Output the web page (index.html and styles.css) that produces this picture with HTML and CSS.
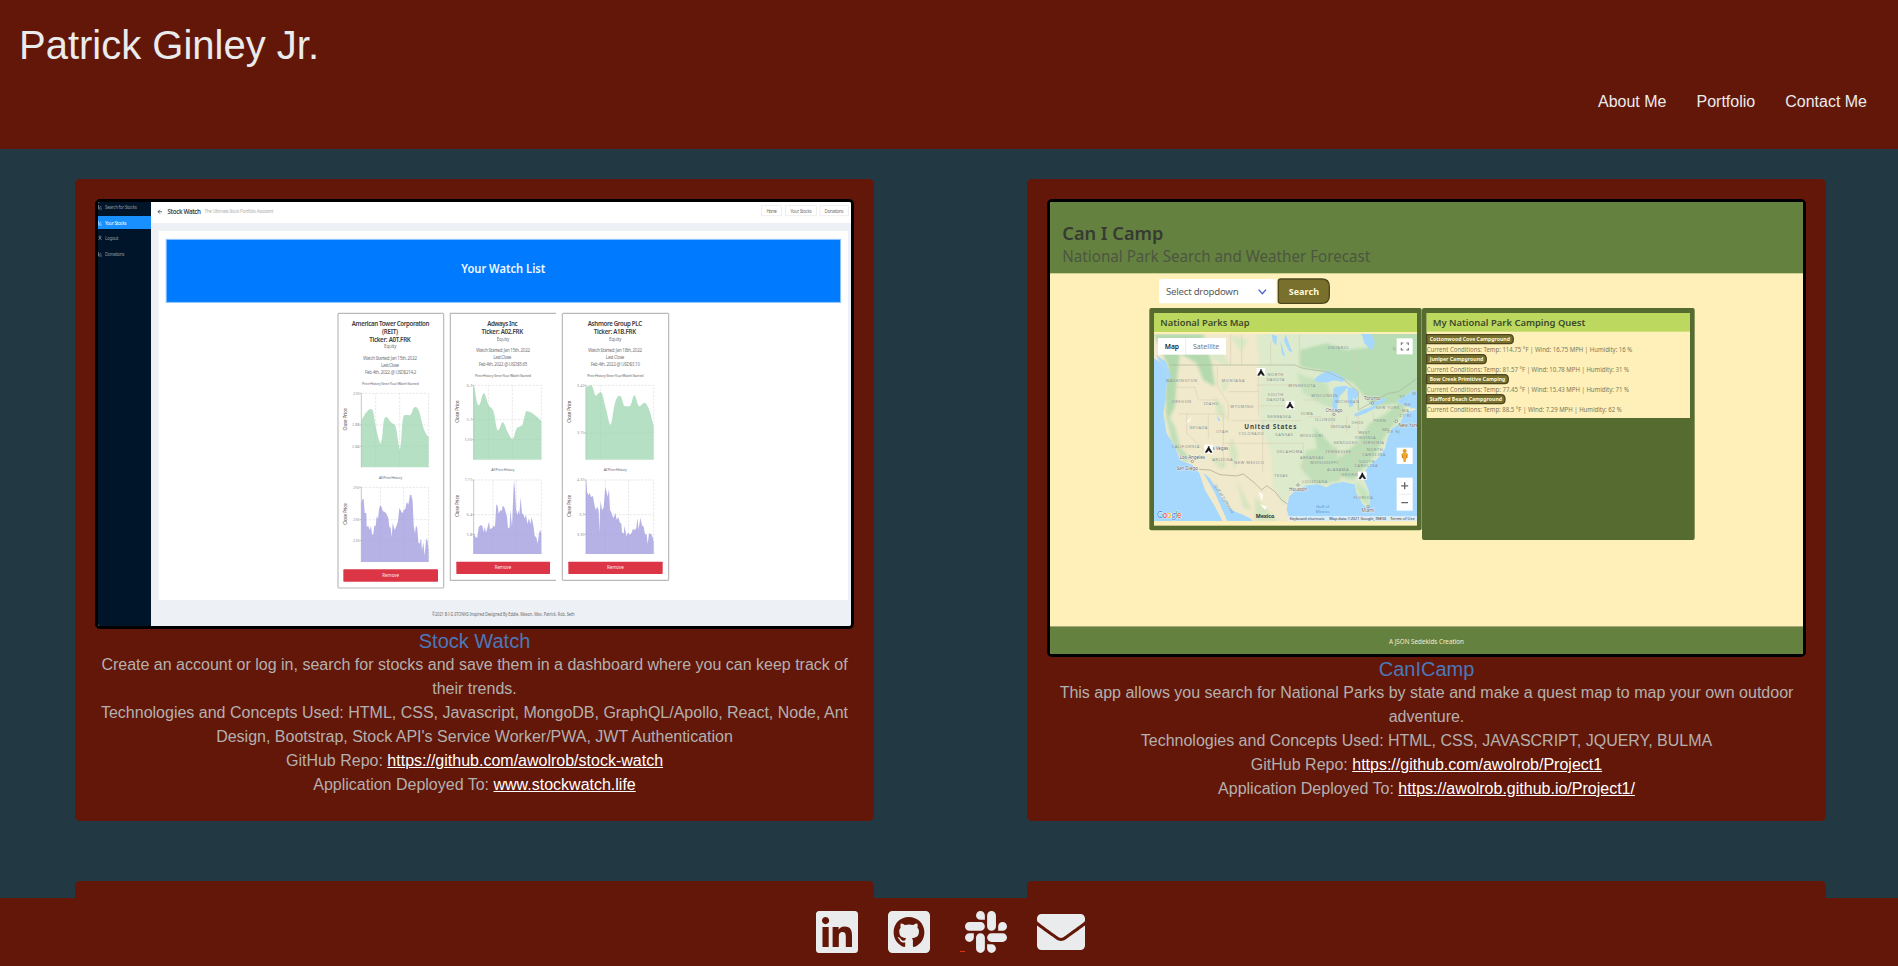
FILE: index.html
```html
<!DOCTYPE html>
<html lang="en">
<head>
<meta charset="utf-8">
<title>Patrick Ginley Jr.</title>
<link rel="stylesheet" href="styles.css">
</head>
<body>
<header class="site-header">
  <h1 class="site-title">Patrick Ginley Jr.</h1>
  <nav class="site-nav">
    <a href="#about">About Me</a>
    <a href="#portfolio">Portfolio</a>
    <a href="#contact">Contact Me</a>
  </nav>
</header>

<main class="projects">
  <article class="project">
    <svg class="shot" viewBox="98 202 753 424" width="753" height="424">
      <rect x="98" y="202" width="753" height="424" fill="#edf1f5"/>
      <rect x="98" y="202" width="53" height="424" fill="#001529"/>
      <rect x="98" y="216" width="53" height="13" fill="#1890ff"/>
      <g font-size="4.6" fill="#8c959f">
        <text x="105" y="209" textLength="32">Search for Stocks</text>
        <text x="105" y="224.6" textLength="21.5" fill="#fff">Your Stocks</text>
        <text x="105" y="240.3" textLength="13.5">Logout</text>
        <text x="105" y="256" textLength="19.5">Donations</text>
      </g>
      <g stroke="#8c959f" stroke-width=".7" fill="none">
        <path d="M98.500 205v4h3.500M99.500 208l1-1.500 1 .500"/>
        <path d="M98.500 221v4h3.500M99.500 224l1-1.500 1 .500" stroke="#cfe7ff"/>
        <path d="M98.500 240l1.500-2 1.500 2"/><circle cx="100" cy="237" r="1"/>
        <path d="M98.500 252v4h3.500M99.500 255l1-1.500 1 .500"/>
      </g>
      <rect x="151" y="202" width="700" height="21" fill="#fff"/>
      <path d="M162 211.700h-4M160 209.700l-2 2 2 2" stroke="#333" stroke-width=".7" fill="none"/>
      <text x="167.500" y="214" font-size="6.200" font-weight="600" fill="#444" textLength="33.500">Stock Watch</text>
      <text x="204.500" y="213" font-size="4.600" fill="#b4b4b4" textLength="69">The Ultimate Stock Portfolio Assistant</text>
      <g fill="#fff" stroke="#ececec" stroke-width=".8">
        <rect x="761.500" y="205.700" width="20" height="10"/><rect x="785.500" y="205.700" width="31" height="10"/><rect x="820" y="205.700" width="28.500" height="10"/>
      </g>
      <g font-size="4.600" fill="#777" text-anchor="middle">
        <text x="771.700" y="212.600" textLength="10.500">Home</text><text x="801" y="212.600" textLength="21.500">Your Stocks</text><text x="834" y="212.600" textLength="19">Donations</text>
      </g>
      <rect x="158.700" y="231" width="689.300" height="369" fill="#fff"/>
      <rect x="166.200" y="239.400" width="674.400" height="63" fill="#007bff" stroke="#8fc4ff" stroke-width="1"/>
      <text x="503.300" y="272.500" font-size="12" font-weight="600" fill="#f2f8ff" text-anchor="middle" textLength="84" lengthAdjust="spacingAndGlyphs">Your Watch List</text>

      <g transform="translate(320 300) scale(.33333)">
        <g fill="none" stroke="#b9b9bb" stroke-width="3.500">
          <rect x="54" y="40" width="317" height="824" rx="3"/>
          <path d="M708 40H391V841H708"/>
          <rect x="727" y="40" width="319" height="801" rx="3"/>
        </g>
        <g font-size="18.500" font-weight="600" fill="#3c3c40" text-anchor="middle">
          <text x="212" y="78" textLength="233">American Tower Corporation</text>
          <text x="210" y="102" textLength="48">(REIT)</text>
          <text x="210" y="125" textLength="125">Ticker: A0T.FRK</text>
          <text x="547" y="78" textLength="91">Adways Inc</text>
          <text x="547" y="102" textLength="125">Ticker: A02.FRK</text>
          <text x="885" y="78" textLength="163">Ashmore Group PLC</text>
          <text x="885" y="102" textLength="127">Ticker: A1B.FRK</text>
        </g>
        <g font-size="13.500" fill="#77777b" text-anchor="middle">
          <text x="211" y="145" textLength="38">Equity</text>
          <text x="210" y="179" textLength="162">Watch Started: Jan 15th, 2022</text>
          <text x="210" y="201" textLength="54">Last Close</text>
          <text x="212" y="221" textLength="154">Feb 4th, 2022 @ USD$214.2</text>
          <text x="549" y="122" textLength="38">Equity</text>
          <text x="549" y="156" textLength="162">Watch Started: Jan 15th, 2022</text>
          <text x="547" y="178" textLength="54">Last Close</text>
          <text x="549" y="198" textLength="146">Feb 4th, 2022 @ USD$5.65</text>
          <text x="886" y="122" textLength="38">Equity</text>
          <text x="885" y="156" textLength="162">Watch Started: Jan 18th, 2022</text>
          <text x="885" y="178" textLength="56">Last Close</text>
          <text x="886" y="198" textLength="148">Feb 4th, 2022 @ USD$3.10</text>
        </g>
        <g font-size="11" fill="#6a6a6e" text-anchor="middle">
          <text x="211" y="254" textLength="170">Price History Since Your Watch Started</text>
          <text x="549" y="230" textLength="168">Price History Since Your Watch Started</text>
          <text x="886" y="230" textLength="169">Price History Since Your Watch Started</text>
          <text x="212" y="537" textLength="70">All Price History</text>
          <text x="549" y="513" textLength="70">All Price History</text>
          <text x="886" y="513" textLength="70">All Price History</text>
        </g>
        <g fill="none" stroke="#dcdce0" stroke-width="2" stroke-dasharray="7 4">
          <path d="M124 280H326V502M167 280V502M239 280V502M124 375H326M124 439H326"/>
          <path d="M124 562H326V786M181 562V786M251 562V786M124 659H326M124 722H326"/>
          <path d="M461 256H664V479M505 256V479M577 256V479M461 359H664M461 419H664"/>
          <path d="M461 540H664V762M519 540V762M589 540V762M461 644H664M461 703H664"/>
          <path d="M798 256H1001V479M841 256V479M798 399H1001"/>
          <path d="M798 540H1001V762M856 540V762M926 540V762M798 644H1001M798 703H1001"/>
        </g>
        <path d="M124 280V502M124 562V786M461 256V479M461 540V762M798 256V479M798 540V762M118 280h6M118 375h6M118 439h6M118 562h6M118 659h6M118 722h6M455 256h6M455 359h6M455 419h6M455 540h6M455 644h6M455 703h6M792 256h6M792 399h6M792 540h6M792 644h6M792 703h6" stroke="#aaaaae" stroke-width="2" fill="none"/>
        <g fill="#97d3a9" fill-opacity=".7">
          <path d="M124 362C130 350 143 326 153 327C166 329 158 365 181 431C191 420 186 356 197 351C205 350 208 365 217 370C232 378 227 385 239 449C246 440 244 350 253 346C262 344 265 347 271 345C278 340 277 321 286 321C305 322 300 385 326 411V502H124Z"/>
          <path d="M461 256C466 265 469 316 476 316C483 316 485 280 491 280C497 280 500 304 506 316C511 324 516 322 520 333C526 348 528 391 534 391C540 391 543 367 548 367C553 367 557 384 562 394C567 403 572 417 577 417C583 417 585 389 592 383C598 378 602 381 607 374C613 361 615 333 620 333C628 333 648 345 664 364V479H461Z"/>
          <path d="M798 264C803 257 810 255 814 255C820 257 822 287 828 287C833 285 837 276 842 276C849 279 852 305 857 323C863 345 867 374 872 374C878 372 880 288 899 287C907 287 908 318 915 319H929C935 317 938 286 943 286C949 288 952 319 958 319C963 318 968 308 974 308C984 311 993 342 1001 380V479H798Z"/>
        </g>
        <g fill="#a49fe0" fill-opacity=".8">
          <path d="M124 610L127 598L131 597L134 638L139 640L140 680L145 678L149 690L153 678L156 704L160 702L163 677L167 678L170 649L174 657L177 628L181 615L185 622L189 634L195 636L200 643L205 654L208 680L212 683L215 712L218 669L224 690L229 679L234 664L238 624L242 631L247 640L252 629L256 627L260 605L265 614L270 584L274 585L278 604L281 676L285 700L288 676L292 685L295 727L299 731L303 715L306 750L310 727L314 767L317 730L320 714L323 724L326 750V786H124Z"/>
          <path d="M461 700L468 713L472 712L476 682L481 676L487 677L491 697L494 680L498 698L502 685L507 665L510 687L516 685L521 677L525 680L529 613L533 618L536 641L541 630L545 634L548 617L553 622L558 640L561 650L564 685L569 682L571 629L576 680L580 580L582 540L585 570L588 628L592 645L596 630L598 645L602 592L606 640L610 643L614 655L618 645L622 672L627 654L631 673L635 652L641 682L644 708L649 712L653 731L657 699L661 690L664 700V762H461Z"/>
          <path d="M798 540L801 575L805 586L809 578L813 591L819 588L823 613L827 630L832 620L836 632L838 697L840 630L842 602L846 631L851 622L854 582L856 560L860 577L863 590L867 567L870 630L874 637L877 647L881 654L886 638L890 659L895 652L900 669L904 670L906 697L911 701L914 677L919 709L924 697L929 704L934 700L939 686L944 690L949 684L952 654L956 688L961 653L966 676L971 680L975 703L980 703L983 733L987 700L994 703L998 712L1001 725V762H798Z"/>
        </g>
        <g font-size="11" fill="#96969a" text-anchor="end">
          <text x="118" y="284">220</text><text x="118" y="379">2.88</text><text x="118" y="443">2.84</text>
          <text x="118" y="566">250</text><text x="118" y="663">230</text><text x="118" y="726">220</text>
          <text x="456" y="260">6.2</text><text x="456" y="363">5.7</text><text x="456" y="423">5.55</text>
          <text x="456" y="544">7.71</text><text x="456" y="648">6.4</text><text x="456" y="707">5.8</text>
          <text x="793" y="260">3.42</text><text x="793" y="403">3.15</text>
          <text x="793" y="544">4.37</text><text x="793" y="648">3.7</text><text x="793" y="707">3.35</text>
        </g>
        <g font-size="13.500" fill="#4c4c50" text-anchor="middle">
          <text transform="translate(80 358) rotate(-90)" textLength="67">Close Price</text>
          <text transform="translate(80 642) rotate(-90)" textLength="64">Close Price</text>
          <text transform="translate(418 335) rotate(-90)" textLength="67">Close Price</text>
          <text transform="translate(418 618) rotate(-90)" textLength="66">Close Price</text>
          <text transform="translate(754 335) rotate(-90)" textLength="66">Close Price</text>
          <text transform="translate(754 618) rotate(-90)" textLength="66">Close Price</text>
        </g>
        <g fill="#dc3545">
          <rect x="70" y="808" width="284" height="37" rx="2"/><rect x="409" y="785" width="281" height="37" rx="2"/><rect x="745" y="785" width="283" height="37" rx="2"/>
        </g>
        <g font-size="13.500" fill="#ffe9eb" text-anchor="middle">
          <text x="212" y="832" textLength="50">Remove</text><text x="549" y="808" textLength="50">Remove</text><text x="886" y="808" textLength="50">Remove</text>
        </g>
        <text x="550" y="949" font-size="14" fill="#66696e" text-anchor="middle" textLength="428" lengthAdjust="spacingAndGlyphs">©2021 B·I·G STONKS Inspired Designed By Eddie, Mason, Max, Patrick, Rob, Seth</text>
      </g>
    </svg>
    <h2 class="project-name">Stock Watch</h2>
    <p>Create an account or log in, search for stocks and save them in a dashboard where you can keep track of their trends.</p>
    <p>Technologies and Concepts Used: HTML, CSS, Javascript, MongoDB, GraphQL/Apollo, React, Node, Ant Design, Bootstrap, Stock API's Service Worker/PWA, JWT Authentication</p>
    <p>GitHub Repo: <a href="#repo">https://github.com/awolrob/stock-watch</a></p>
    <p>Application Deployed To: <a href="#app">www.stockwatch.life</a></p>
  </article>

  <article class="project">
    <svg class="shot" viewBox="1050 202 753 452" width="753" height="452">
      <defs>
        <clipPath id="map-area"><rect x="42" y="102" width="789" height="562"/></clipPath>
        <filter id="soft"><feGaussianBlur stdDeviation="5"/></filter>
        <clipPath id="land-area"><path id="land" d="M42 102H831V275C815 262 805 290 770 300C775 315 800 320 831 328L795 340L779 370L757 385L742 415L735 445L712 476L680 505L668 530L685 570L690 605L683 624L668 611L650 580L645 553L610 545L575 551L560 562L535 552L500 556L465 572L447 590L440 628L450 664H340C320 640 270 640 255 610L210 535L190 518L225 580L245 625L262 664H248L225 620L195 570L178 520L157 495L120 480L105 440L80 400L70 340L78 290L82 230L72 195L42 175Z"/></clipPath>
      </defs>
      <rect x="1050" y="202" width="753" height="452" fill="#fef0b8"/>
      <rect x="1050" y="202" width="753" height="71.300" fill="#648140"/>
      <g transform="translate(1030 190) scale(.33333)">
        <text x="97" y="150" font-size="55" font-weight="600" fill="#363a33" textLength="303" lengthAdjust="spacingAndGlyphs">Can I Camp</text>
        <text x="97" y="216" font-size="48" fill="#4c563f" textLength="924" lengthAdjust="spacingAndGlyphs">National Park Search and Weather Forecast</text>
        <rect x="387" y="267" width="352" height="73" rx="4" fill="#fff"/>
        <text x="408" y="316" font-size="29" fill="#5a5a5a" textLength="218">Select dropdown</text>
        <path d="M686 299l11 12 11-12" fill="none" stroke="#485fc7" stroke-width="4"/>
        <path d="M752 267H875Q898 267 898 290V317Q898 340 875 340H752Q745 340 745 333V274Q745 267 752 267Z" fill="#79702d" stroke="#4c4620" stroke-width="4"/>
        <text x="776" y="315" font-size="27" font-weight="700" fill="#fff8dc" textLength="91">Search</text>
      </g>

      <g transform="translate(1140 300) scale(.33333)">
        <rect x="28" y="24" width="817" height="667" rx="6" fill="#556b2f"/>
        <rect x="42" y="39" width="789" height="638" fill="#fef0b8"/>
        <rect x="42" y="39" width="789" height="57" fill="#bcd85f"/>
        <text x="61" y="79" font-size="28" font-weight="600" fill="#3d4a2c" textLength="268" lengthAdjust="spacingAndGlyphs">National Parks Map</text>
        <g clip-path="url(#map-area)">
          <rect x="42" y="102" width="789" height="562" fill="#a6d8fd"/>
          <use href="#land" fill="#f1e9cc"/>
          <g clip-path="url(#land-area)">
            <g filter="url(#soft)">
              <path d="M350 95H840V300L780 380L740 430L690 520L700 630H650L640 560L450 580L430 620L400 560L390 450L360 380L360 210Z" fill="#ddeacb"/>
              <path d="M480 95H840V290L770 310L700 320L640 250L560 215L480 200Z" fill="#b8dcb3"/>
              <path d="M480 95H660L700 140L620 150L560 130L480 150Z" fill="#dcebcf"/>
              <path d="M42 102H190L215 190L225 260L190 240L170 190L120 160L110 240L105 320L80 370L75 250L85 200Z" fill="#b4d9af"/>
              <path d="M75 330L105 380L120 440L155 480L130 485L95 430Z" fill="#bfdfb8"/>
              <path d="M520 380L580 440L590 480L650 430L690 370L740 340L800 290L790 340L740 400L700 470L640 540L600 530L540 500Z" fill="#bcddb5"/>
              <path d="M470 220L560 250L590 330L540 310L490 280Z" fill="#c8e2bd"/>
              <path d="M500 450L590 440L600 545L520 550L480 500Z" fill="#c1dfb8"/>
              <path d="M645 545L680 570L690 620L665 600Z" fill="#c5e3bd"/>
              <path d="M225 290l25 30 10 40-30-20zM275 410l20 50-10 50-20-60zM205 470l60 20-20 20zM290 540l45 90-25-5zM345 590l70 74h-70z" fill="#d5e5bf"/>
              <path d="M180 110l60 30 30 60-50-20zM270 105l55 15-20 40zM170 300l15 30M240 240l30 10-20 30z" fill="#d9e8c6"/>
            </g>
            <g fill="#a6d8fd">
              <path d="M521 242Q545 212 575 214Q600 225 616 236L607 247Q580 236 565 247Q545 250 521 242Z"/>
              <path d="M581 263Q600 256 625 259L610 278Q592 285 591 330Q578 335 577 315Q578 285 581 263Z"/>
              <path d="M624 262Q650 260 655 285L647 301L638 291L640 318L628 321Q620 290 624 262Z"/>
              <path d="M642 343Q665 328 704 317L707 324Q675 343 646 350Z"/>
              <path d="M688 306Q715 308 728 294L740 298Q725 318 695 316Z"/>
              <path d="M395 103l16 6-2 28-10-12zM420 120l10 30 6 20-10-8zM437 103l9 25 12 30-12-6-14-30zM665 102h30l10 28-10 22-22-22z"/>
              <path d="M230 345l11 16-6 3zM48 165l30 20 15 45-5 10z"/>
            </g>
            <path d="M134 372l20-22-4 14zM355 575l14 8-3 22zM360 612l22 8-8 9z" fill="#fffdf2"/>
            <g fill="none" stroke="#dccfb8" stroke-width="1.800">
              <path d="M95 262H165L175 300H232M115 342H205V415M140 342V400L205 462M205 342H250V362M250 362V430H368M250 430V500M275 362H368V515M232 200V260L265 310M265 275H355M265 310V362M355 200V345M350 255H460M355 318H450M368 362H485M368 430H490V450M490 450L495 520M490 300H540M505 350H545M580 430H720M550 460H690M550 460V545M600 460V540M640 460L650 520M577 335V390M620 345V400M655 340V395M700 335V375"/>
              <path d="M272 102V195M305 102V195M392 125V195M478 102V190M640 155L650 210"/>
            </g>
            <path d="M88 195H465L485 204L520 210L560 215L610 238L655 275L655 330L690 310L745 280L775 275L831 235" fill="none" stroke="#a9b5a0" stroke-width="2"/>
            <path d="M178 508L210 510L240 524L290 528L310 522L345 550L365 570L380 557L405 575L425 600L447 615" fill="none" stroke="#b7ad9b" stroke-width="2.500"/>
          </g>
          <g font-size="12" fill="#8c9599" text-anchor="middle" letter-spacing="1.500">
            <text x="125" y="245">WASHINGTON</text><text x="280" y="246">MONTANA</text><text x="407" y="229">NORTH</text><text x="407" y="242">DAKOTA</text>
            <text x="486" y="261">MINNESOTA</text><text x="407" y="289">SOUTH</text><text x="407" y="302">DAKOTA</text><text x="125" y="309">OREGON</text>
            <text x="214" y="314">IDAHO</text><text x="306" y="324">WYOMING</text><text x="554" y="291">WISCONSIN</text><text x="622" y="308">MICHIGAN</text>
            <text x="418" y="353">NEBRASKA</text><text x="501" y="345">IOWA</text><text x="556" y="363">ILLINOIS</text><text x="653" y="371">OHIO</text>
            <text x="743" y="327">NEW YORK</text><text x="720" y="365">PENN</text><text x="602" y="384">INDIANA</text><text x="176" y="386">NEVADA</text>
            <text x="247" y="398">UTAH</text><text x="334" y="405">COLORADO</text><text x="433" y="409">KANSAS</text><text x="515" y="412">MISSOURI</text>
            <text x="673" y="403">WEST</text><text x="676" y="416">VIRGINIA</text><text x="617" y="433">KENTUCKY</text><text x="701" y="433">VIRGINIA</text>
            <text x="137" y="445">CALIFORNIA</text><text x="449" y="459">OKLAHOMA</text><text x="595" y="459">TENNESSEE</text><text x="705" y="454">NORTH</text><text x="702" y="467">CAROLINA</text>
            <text x="248" y="483">ARIZONA</text><text x="328" y="493">NEW MEXICO</text><text x="516" y="476">ARKANSAS</text><text x="553" y="493">MISSISSIPPI</text>
            <text x="681" y="489">SOUTH</text><text x="679" y="501">CAROLINA</text><text x="594" y="513">ALABAMA</text><text x="423" y="530">TEXAS</text>
            <text x="636" y="529">GEORGIA</text><text x="525" y="549">LOUISIANA</text><text x="670" y="598">FLORIDA</text><text x="595" y="146">ONTARIO</text>
            <text x="738" y="393">MD</text><text x="762" y="399">DE NJ</text><text x="787" y="295">VT</text><text x="803" y="317">NH</text><text x="797" y="336">MA</text><text x="797" y="350">CT RI</text><text x="763" y="151">Q</text><text x="823" y="286">M</text>
          </g>
          <g font-size="13.500" fill="#555" stroke="#fff" stroke-width="2" paint-order="stroke" text-anchor="middle">
            <text x="697" y="300">Toronto</text><text x="582" y="336">Chicago</text><text x="805" y="382">New York</text><text x="241" y="451">s Vegas</text>
            <text x="157" y="476">Los Angeles</text><text x="142" y="511">San Diego</text><text x="474" y="572">Houston</text><text x="684" y="636">Miami</text>
          </g>
          <g fill="#fff" stroke="#666" stroke-width="1.800"><circle cx="697" cy="309" r="3.500"/><circle cx="582" cy="343" r="3.500"/><circle cx="769" cy="364" r="3.500"/><circle cx="157" cy="484" r="3.500"/><circle cx="474" cy="555" r="3.500"/><circle cx="684" cy="620" r="3.500"/></g>
          <text x="313" y="388" font-size="19" font-weight="700" fill="#444" textLength="156">United States</text>
          <text x="347" y="654" font-size="16" font-weight="700" fill="#333" textLength="56">Mexico</text>
          <g font-size="12.500" fill="#5a96d2" text-anchor="middle"><text x="548" y="624">Gulf of</text><text x="548" y="638">Mexico</text><text transform="translate(248 599) rotate(57)" textLength="100">Gulf of California</text></g>

          <g fill="#fff">
            <rect x="54" y="114" width="204" height="50"/><rect x="770" y="115" width="48" height="48"/><rect x="770" y="443" width="48" height="49"/><rect x="770" y="533" width="48" height="99"/>
            <rect x="350" y="204" width="26" height="25"/><rect x="437" y="303" width="26" height="25"/><rect x="193" y="434" width="26" height="27"/><rect x="654" y="515" width="26" height="25"/>
          </g>
          <path d="M137 114V164M776 583H812" stroke="#e3e3e3" stroke-width="2"/>
          <text x="74" y="147" font-size="22" font-weight="600" fill="#222" textLength="43" lengthAdjust="spacingAndGlyphs">Map</text>
          <text x="159" y="147" font-size="22" fill="#777" textLength="79" lengthAdjust="spacingAndGlyphs">Satellite</text>
          <path d="M784 135V129H790M799 129H805V135M805 144V150H799M790 150H784V144" fill="none" stroke="#777" stroke-width="3.500"/>
          <path d="M794 547V568M783.500 557.500H804.500M784 608H804" stroke="#666" stroke-width="4"/>
          <circle cx="794" cy="453" r="6" fill="#e99a24"/><path d="M784 462Q794 455 804 462L802 475H799L797 486H791L789 475H786Z" fill="#f2a52c"/><path d="M788 466V474M800 466V474" stroke="#b96c18" stroke-width="2"/>
          <g fill="#161616" stroke="#161616" stroke-width="2">
            <path id="tent" d="M361 209L365 209L364 211L373 226H368L363 219L358 226H353L362 211Z"/>
            <use href="#tent" x="87" y="98"/><use href="#tent" x="-157" y="231"/><use href="#tent" x="304" y="310"/>
          </g>
          <text y="654" font-family="Lato, sans-serif" font-size="26" font-weight="400" stroke="#fff" stroke-width="2" paint-order="stroke" x="50" textLength="75"><tspan fill="#4285f4">G</tspan><tspan fill="#ea4335">o</tspan><tspan fill="#fbbc05">o</tspan><tspan fill="#4285f4">g</tspan><tspan fill="#34a853">l</tspan><tspan fill="#ea4335">e</tspan></text>
          <rect x="445" y="648" width="386" height="16" fill="#eef3f3" fill-opacity=".75"/>
          <g font-size="11.500" fill="#333"><text x="449" y="659" textLength="104" lengthAdjust="spacingAndGlyphs">Keyboard shortcuts</text><text x="568" y="659" textLength="170" lengthAdjust="spacingAndGlyphs">Map data ©2021 Google, INEGI</text><text x="751" y="659" textLength="73" lengthAdjust="spacingAndGlyphs">Terms of Use</text></g>
        </g>
      </g>

      <g transform="translate(1410 290) scale(.33333)">
        <rect x="36" y="54" width="818" height="696" rx="6" fill="#556b2f"/>
        <rect x="50" y="69" width="790" height="315" fill="#fef0b8"/>
        <rect x="50" y="69" width="790" height="56" fill="#bcd85f"/>
        <text x="68" y="109" font-size="28" font-weight="600" fill="#3d4a2c" textLength="458" lengthAdjust="spacingAndGlyphs">My National Park Camping Quest</text>
        <g fill="#79702d" stroke="#4c4620" stroke-width="4">
          <path d="M50 134H298Q310 134 310 148T298 161H50Z"/><path d="M50 194H217Q229 194 229 208T217 221H50Z"/><path d="M50 254H283Q295 254 295 268T283 281H50Z"/><path d="M50 314H273Q285 314 285 328T273 341H50Z"/>
        </g>
        <g font-size="18" font-weight="700" fill="#fff8dc">
          <text x="59" y="154" textLength="241" lengthAdjust="spacingAndGlyphs">Cottonwood Cove Campground</text>
          <text x="59" y="214" textLength="161" lengthAdjust="spacingAndGlyphs">Juniper Campground</text>
          <text x="59" y="274" textLength="227" lengthAdjust="spacingAndGlyphs">Bow Creek Primitive Camping</text>
          <text x="59" y="334" textLength="217" lengthAdjust="spacingAndGlyphs">Stafford Beach Campground</text>
        </g>
        <g font-size="20" fill="#7d795c">
          <text x="50" y="185" textLength="617" lengthAdjust="spacingAndGlyphs">Current Conditions: Temp: 114.75 °F | Wind: 16.75 MPH | Humidity: 16 %</text>
          <text x="50" y="245" textLength="607" lengthAdjust="spacingAndGlyphs">Current Conditions: Temp: 81.57 °F | Wind: 10.78 MPH | Humidity: 31 %</text>
          <text x="50" y="305" textLength="607" lengthAdjust="spacingAndGlyphs">Current Conditions: Temp: 77.45 °F | Wind: 15.43 MPH | Humidity: 71 %</text>
          <text x="50" y="365" textLength="585" lengthAdjust="spacingAndGlyphs">Current Conditions: Temp: 88.5 °F | Wind: 7.29 MPH | Humidity: 62 %</text>
        </g>
      </g>
      <rect x="1050" y="627" width="753" height="27" fill="#648140"/>
      <rect x="1050" y="626" width="753" height="1" fill="#a8a77c"/>
      <text x="1426.500" y="643.800" font-size="6.300" fill="#f3edd0" text-anchor="middle" textLength="75">A JSON Sedekids Creation</text>
    </svg>
    <h2 class="project-name">CanICamp</h2>
    <p>This app allows you search for National Parks by state and make a quest map to map your own outdoor adventure.</p>
    <p>Technologies and Concepts Used: HTML, CSS, JAVASCRIPT, JQUERY, BULMA</p>
    <p>GitHub Repo: <a href="#repo2">https://github.com/awolrob/Project1</a></p>
    <p>Application Deployed To: <a href="#app2">https://awolrob.github.io/Project1/</a></p>
  </article>

  <article class="project"></article>
  <article class="project"></article>
</main>

<footer class="site-footer">
  <a href="#linkedin" aria-label="LinkedIn"><svg class="icon" viewBox="0 32 448 448"><path d="M416 32H31.900C14.300 32 0 46.500 0 64.300v383.400C0 465.500 14.300 480 31.900 480H416c17.600 0 32-14.500 32-32.300V64.300c0-17.800-14.400-32.300-32-32.300zM135.400 416H69V202.200h66.500V416zm-33.200-243c-21.300 0-38.500-17.300-38.500-38.500S80.900 96 102.200 96c21.200 0 38.500 17.300 38.500 38.500 0 21.300-17.200 38.500-38.500 38.500zm282.100 243h-66.400V312c0-24.800-.5-56.700-34.500-56.700-34.600 0-39.900 27-39.900 54.900V416h-66.400V202.200h63.700v29.200h.9c8.900-16.800 30.600-34.500 62.900-34.500 67.200 0 79.700 44.300 79.700 101.900V416z"/></svg></a>
  <a href="#github" aria-label="GitHub"><svg class="icon" viewBox="0 32 448 448"><path d="M400 32H48C21.500 32 0 53.500 0 80v352c0 26.500 21.500 48 48 48h352c26.500 0 48-21.500 48-48V80c0-26.500-21.500-48-48-48zM277.300 415.700c-8.400 1.500-11.500-3.700-11.500-8 0-5.400.2-33 .2-55.300 0-15.600-5.200-25.500-11.300-30.700 37-4.100 76-9.200 76-73.100 0-18.200-6.500-27.300-17.100-39 1.700-4.300 7.400-22-1.700-45-13.900-4.300-45.700 17.900-45.700 17.900-13.200-3.700-27.500-5.600-41.600-5.600-14.100 0-28.400 1.900-41.600 5.600 0 0-31.800-22.200-45.700-17.900-9.100 22.900-3.500 40.600-1.700 45-10.600 11.700-15.600 20.800-15.600 39 0 63.600 37.300 69 74.300 73.100-4.800 4.300-9.100 11.700-10.600 22.300-9.500 4.300-33.800 11.700-48.300-13.900-9.100-15.800-25.500-17.100-25.500-17.100-16.200-.2-1.100 10.200-1.100 10.200 10.800 5 18.400 24.200 18.400 24.200 9.700 29.700 56.100 19.700 56.100 19.700 0 13.900.2 36.500.2 40.600 0 4.300-3 9.500-11.500 8-66-22.100-112.200-84.900-112.200-158.300 0-91.800 70.200-161.500 162-161.500S388 165.600 388 257.400c.1 73.400-44.700 136.300-110.700 158.300z"/></svg></a>
  <a href="#slack" aria-label="Slack"><span class="link-gap"></span><svg class="icon" viewBox="0 32 448 448"><path d="M94.120 315.100c0 25.900-21.160 47.060-47.060 47.060S0 341 0 315.100c0-25.900 21.160-47.060 47.060-47.060h47.060v47.060zm23.720 0c0-25.900 21.160-47.060 47.060-47.060s47.060 21.160 47.060 47.060v117.840c0 25.900-21.160 47.060-47.060 47.060s-47.060-21.160-47.060-47.060V315.100zm47.060-188.980c-25.900 0-47.060-21.160-47.060-47.060S139 32 164.900 32s47.060 21.160 47.060 47.060v47.060H164.900zm0 23.720c25.900 0 47.060 21.160 47.060 47.060s-21.160 47.060-47.060 47.060H47.060C21.160 243.960 0 222.800 0 196.900s21.160-47.060 47.060-47.060H164.900zm188.980 47.060c0-25.900 21.160-47.060 47.060-47.060 25.900 0 47.060 21.160 47.060 47.060s-21.160 47.060-47.060 47.060h-47.060V196.900zm-23.720 0c0 25.900-21.160 47.060-47.060 47.060-25.900 0-47.060-21.160-47.060-47.060V79.060c0-25.900 21.160-47.060 47.060-47.060 25.900 0 47.060 21.160 47.060 47.060V196.900zM283.100 385.880c25.900 0 47.060 21.160 47.060 47.060 0 25.900-21.160 47.060-47.060 47.060-25.900 0-47.060-21.160-47.060-47.060v-47.060h47.060zm0-23.720c-25.900 0-47.060-21.160-47.060-47.060 0-25.900 21.160-47.060 47.060-47.060h117.840c25.900 0 47.060 21.160 47.060 47.060 0 25.900-21.160 47.060-47.060 47.060H283.100z"/></svg></a>
  <a href="#mail" aria-label="Email"><svg class="icon icon-wide" viewBox="0 32 512 448"><path d="M502.300 190.800c3.900-3.100 9.700-.2 9.700 4.700V400c0 26.500-21.500 48-48 48H48c-26.500 0-48-21.500-48-48V195.600c0-5 5.700-7.800 9.700-4.700 22.400 17.400 52.100 39.500 154.100 113.600 21.100 15.400 56.700 47.800 92.200 47.600 35.700.3 72-32.800 92.300-47.600 102-74.100 131.600-96.300 154-113.700zM256 320c23.200.4 56.600-29.200 73.400-41.400 132.700-96.300 142.800-104.700 173.400-128.700 5.800-4.500 9.200-11.500 9.200-18.900v-19c0-26.500-21.500-48-48-48H48c-26.500 0-48 21.500-48 48v19c0 7.400 3.400 14.300 9.200 18.900 30.600 23.900 40.700 32.400 173.400 128.700 16.800 12.200 50.200 41.800 73.400 41.400z"/></svg></a>
</footer>
</body>
</html>
```
FILE: styles.css
```css
* {
  box-sizing: border-box;
}

body {
  margin: 0;
  height: 100vh;
  overflow: hidden;
  display: flex;
  flex-direction: column;
  background: #223843;
  color: #b5b0b0;
  font: 16px/24px "Liberation Sans", Arial, sans-serif;
}

.site-header {
  flex: none;
  height: 149px;
  padding: 21px 31px 0 19px;
  background: #621708;
}

.site-title {
  margin: 0;
  font-size: 40px;
  font-weight: 400;
  line-height: 48px;
  color: #eaebed;
}

.site-nav {
  display: flex;
  justify-content: flex-end;
  gap: 30px;
  padding-top: 21px;
}

.site-nav a {
  color: #eaebed;
  text-decoration: none;
}

.projects {
  flex: 1;
  min-height: 0;
  overflow: hidden;
  display: grid;
  grid-template-columns: 799px 799px;
  grid-template-rows: 642px 642px;
  column-gap: 153px;
  row-gap: 60px;
  padding: 30px 0 0 75px;
}

.project {
  padding: 20px;
  border-radius: 5px;
  background: #621708;
  text-align: center;
}

.project p {
  margin: 0;
}

.project p a {
  color: #fff;
}

.project-name {
  margin: 0;
  font-size: 20px;
  font-weight: 400;
  line-height: 24px;
  color: #4c78ba;
}

.shot {
  display: block;
  box-sizing: content-box;
  border: 3px solid #000;
  border-radius: 5px;
  font-family: "Noto Sans", sans-serif;
}

.site-footer {
  flex: none;
  display: flex;
  justify-content: center;
  gap: 30px;
  height: 68px;
  padding: 13px 0 0 3px;
  background: #621708;
}

.site-footer a {
  display: flex;
}

.icon {
  display: block;
  width: 42px;
  height: 42px;
  fill: #eaebed;
}

.icon-wide {
  width: 48px;
}

.link-gap {
  width: 5px;
  height: 41px;
  border-bottom: 1px solid #e6320c;
}
```
